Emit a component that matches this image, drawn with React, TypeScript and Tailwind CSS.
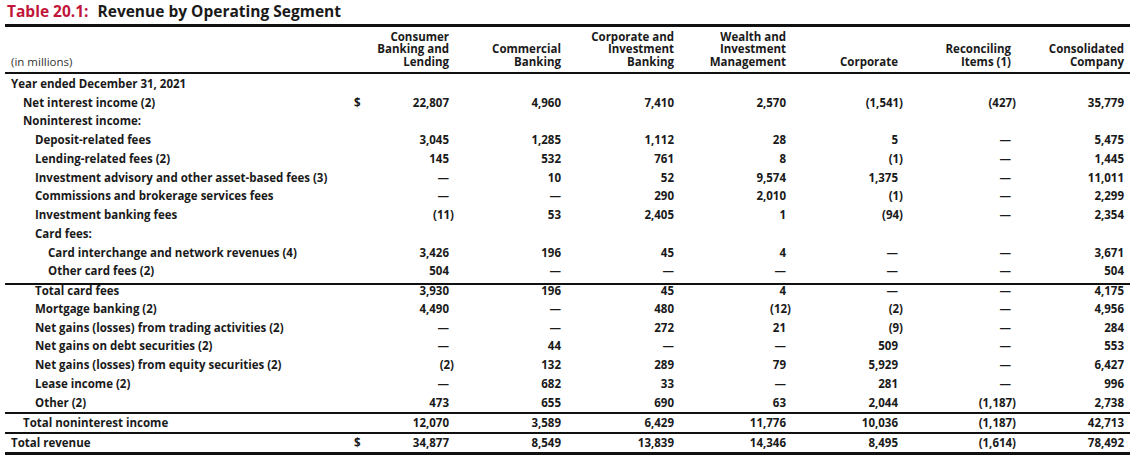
type Row = { label: string; indent: number; dollar?: boolean; vals?: string[]; cls: string };

const rows: Row[] = [
  { label: "Year ended December 31, 2021", indent: 0, cls: "h-[18.75px]" },
  { label: "Net interest income (2)", indent: 1, dollar: true, vals: ["22,807", "4,960", "7,410", "2,570", "(1,541)", "(427)", "35,779"], cls: "h-[18.75px]" },
  { label: "Noninterest income:", indent: 1, cls: "h-[18.75px]" },
  { label: "Deposit-related fees", indent: 2, vals: ["3,045", "1,285", "1,112", "28", "5", "—", "5,475"], cls: "h-[18.75px]" },
  { label: "Lending-related fees (2)", indent: 2, vals: ["145", "532", "761", "8", "(1)", "—", "1,445"], cls: "h-[18.75px]" },
  { label: "Investment advisory and other asset-based fees (3)", indent: 2, vals: ["—", "10", "52", "9,574", "1,375", "—", "11,011"], cls: "h-[18.75px]" },
  { label: "Commissions and brokerage services fees", indent: 2, vals: ["—", "—", "290", "2,010", "(1)", "—", "2,299"], cls: "h-[18.75px]" },
  { label: "Investment banking fees", indent: 2, vals: ["(11)", "53", "2,405", "1", "(94)", "—", "2,354"], cls: "h-[18.75px]" },
  { label: "Card fees:", indent: 2, cls: "h-[18.75px]" },
  { label: "Card interchange and network revenues (4)", indent: 3, vals: ["3,426", "196", "45", "4", "—", "—", "3,671"], cls: "h-[18.75px]" },
  { label: "Other card fees (2)", indent: 3, vals: ["504", "—", "—", "—", "—", "—", "504"], cls: "h-[21px] pb-[3px]" },
  { label: "Total card fees", indent: 2, vals: ["3,930", "196", "45", "4", "—", "—", "4,175"], cls: "h-[16px] pb-[2px] border-t-2" },
  { label: "Mortgage banking (2)", indent: 2, vals: ["4,490", "—", "480", "(12)", "(2)", "—", "4,956"], cls: "h-[19px]" },
  { label: "Net gains (losses) from trading activities (2)", indent: 2, vals: ["—", "—", "272", "21", "(9)", "—", "284"], cls: "h-[19px]" },
  { label: "Net gains on debt securities (2)", indent: 2, vals: ["—", "44", "—", "—", "509", "—", "553"], cls: "h-[18.8px]" },
  { label: "Net gains (losses) from equity securities (2)", indent: 2, vals: ["(2)", "132", "289", "79", "5,929", "—", "6,427"], cls: "h-[18.8px]" },
  { label: "Lease income (2)", indent: 2, vals: ["—", "682", "33", "—", "281", "—", "996"], cls: "h-[18.8px]" },
  { label: "Other (2)", indent: 2, vals: ["473", "655", "690", "63", "2,044", "(1,187)", "2,738"], cls: "h-[19px]" },
  { label: "Total noninterest income", indent: 1, vals: ["12,070", "3,589", "6,429", "11,776", "10,036", "(1,187)", "42,713"], cls: "h-[20px] border-t-2" },
  { label: "Total revenue", indent: 0, dollar: true, vals: ["34,877", "8,549", "13,839", "14,346", "8,495", "(1,614)", "78,492"], cls: "h-[23px] border-t-2 border-b-[3px]" },
];

const indents = ["pl-[6px]", "pl-[18px]", "pl-[30px]", "pl-[43px]"];
const colW = ["w-[85px]", "w-[112px]", "w-[113px]", "w-[112px]", "w-[112px]", "w-[113px]", "w-[113px]"];

const heads = [
  ["Consumer", "Banking and", "Lending"],
  ["Commercial", "Banking"],
  ["Corporate and", "Investment", "Banking"],
  ["Wealth and", "Investment", "Management"],
  ["Corporate"],
  ["Reconciling", "Items (1)"],
  ["Consolidated", "Company"],
];

const Val = ({ v }: { v: string }) =>
  v.startsWith("(") ? <span className="-mr-[5px]">{v}</span> : <span>{v}</span>;

export default function App() {
  return (
    <div className="w-[1134px] h-[458px] bg-white text-[#1a1a1a] font-['Open_Sans',sans-serif]">
      <div className="pl-[7px] h-[24px] text-[15.5px] font-bold leading-[22px] whitespace-nowrap">
        <span className="text-[#c1163a]">Table 20.1:</span>
        <span className="ml-[9px]">Revenue by Operating Segment</span>
      </div>
      <div className="ml-[5px] w-[1125px] text-[11.5px] font-bold">
        <div className="flex items-end h-[50px] border-t-[3px] border-b-2 border-[#111] pb-[4px]">
          <div className="w-[345px] pl-[6px] font-normal text-[#333] leading-[12.5px]">(in millions)</div>
          <div className="w-[20px]"></div>
          {heads.map((h, i) => (
            <div key={i} className={`${colW[i]} pr-[6px] text-right leading-[12.5px] whitespace-nowrap`}>
              {h.map((l) => (
                <div key={l}>{l}</div>
              ))}
            </div>
          ))}
        </div>
        {rows.map((r, ri) => (
          <div key={ri} className={`flex items-center leading-[11px] border-[#111] ${r.cls}`}>
            <div className={`w-[345px] ${indents[r.indent]} whitespace-nowrap`}>{r.label}</div>
            <div className="w-[20px] pl-[4px]">{r.dollar ? "$" : ""}</div>
            {(r.vals ?? ["", "", "", "", "", "", ""]).map((v, vi) => (
              <div key={vi} className={`${colW[vi]} pr-[6px] text-right whitespace-nowrap`}>
                <Val v={v} />
              </div>
            ))}
          </div>
        ))}
      </div>
    </div>
  );
}
